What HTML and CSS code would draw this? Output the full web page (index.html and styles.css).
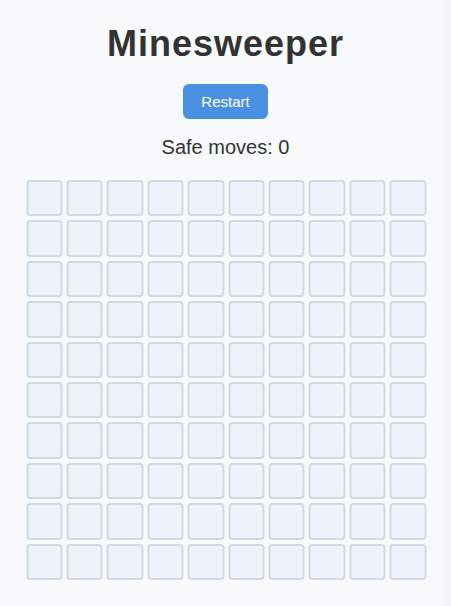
FILE: index.html
```html
<!DOCTYPE html>
<html lang="en">
<head>
<meta charset="utf-8">
<title>Minesweeper</title>
<link rel="stylesheet" href="styles.css">
</head>
<body>
<main class="app">
  <h1 class="title">Minesweeper</h1>
  <button class="restart" type="button">Restart</button>
  <p class="status">Safe moves: 0</p>
  <div class="board" id="board">
    <div class="cell"></div><div class="cell"></div><div class="cell"></div><div class="cell"></div><div class="cell"></div><div class="cell"></div><div class="cell"></div><div class="cell"></div><div class="cell"></div><div class="cell"></div>
    <div class="cell"></div><div class="cell"></div><div class="cell"></div><div class="cell"></div><div class="cell"></div><div class="cell"></div><div class="cell"></div><div class="cell"></div><div class="cell"></div><div class="cell"></div>
    <div class="cell"></div><div class="cell"></div><div class="cell"></div><div class="cell"></div><div class="cell"></div><div class="cell"></div><div class="cell"></div><div class="cell"></div><div class="cell"></div><div class="cell"></div>
    <div class="cell"></div><div class="cell"></div><div class="cell"></div><div class="cell"></div><div class="cell"></div><div class="cell"></div><div class="cell"></div><div class="cell"></div><div class="cell"></div><div class="cell"></div>
    <div class="cell"></div><div class="cell"></div><div class="cell"></div><div class="cell"></div><div class="cell"></div><div class="cell"></div><div class="cell"></div><div class="cell"></div><div class="cell"></div><div class="cell"></div>
    <div class="cell"></div><div class="cell"></div><div class="cell"></div><div class="cell"></div><div class="cell"></div><div class="cell"></div><div class="cell"></div><div class="cell"></div><div class="cell"></div><div class="cell"></div>
    <div class="cell"></div><div class="cell"></div><div class="cell"></div><div class="cell"></div><div class="cell"></div><div class="cell"></div><div class="cell"></div><div class="cell"></div><div class="cell"></div><div class="cell"></div>
    <div class="cell"></div><div class="cell"></div><div class="cell"></div><div class="cell"></div><div class="cell"></div><div class="cell"></div><div class="cell"></div><div class="cell"></div><div class="cell"></div><div class="cell"></div>
    <div class="cell"></div><div class="cell"></div><div class="cell"></div><div class="cell"></div><div class="cell"></div><div class="cell"></div><div class="cell"></div><div class="cell"></div><div class="cell"></div><div class="cell"></div>
    <div class="cell"></div><div class="cell"></div><div class="cell"></div><div class="cell"></div><div class="cell"></div><div class="cell"></div><div class="cell"></div><div class="cell"></div><div class="cell"></div><div class="cell"></div>
  </div>
</main>
</body>
</html>
```
FILE: styles.css
```css
html, body {
  margin: 0;
  padding: 0;
  height: 100%;
}

body {
  font-family: "Liberation Sans", Arial, sans-serif;
  color: #333333;
  background: linear-gradient(to right, #f8f9fb 0, #f8f9fb calc(100% - 18px), #f3f4f6 100%);
  overflow: hidden;
}

.app {
  display: flex;
  flex-direction: column;
  align-items: center;
  padding-top: 23px;
}

.title {
  margin: 0;
  font-size: 36px;
  font-weight: 700;
  letter-spacing: 1px;
  color: #333333;
  line-height: 41px;
}

.restart {
  margin-top: 20px;
  font-family: "Liberation Sans", Arial, sans-serif;
  font-size: 15px;
  color: #ffffff;
  background: #4a90e2;
  border: none;
  border-radius: 6px;
  padding: 0 18px;
  height: 35px;
  line-height: 35px;
}

.status {
  margin: 17px 0 0;
  font-size: 20px;
  line-height: 23px;
  color: #333333;
}

.board {
  margin-top: 21px;
  width: 400px;
  display: grid;
  grid-template-columns: repeat(10, 1fr);
  gap: 4px;
  transform: translateX(0.5px);
}

.cell {
  aspect-ratio: 1 / 1;
  box-sizing: border-box;
  background: #eef3fb;
  border: 2px solid #d1d9e5;
  border-radius: 4px;
}
```
